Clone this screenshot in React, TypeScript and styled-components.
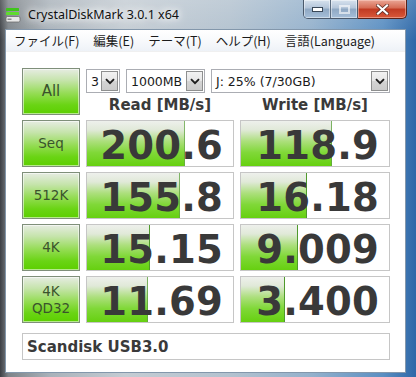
import React from 'react';
import styled, { createGlobalStyle } from 'styled-components';

const GlobalStyle = createGlobalStyle`
  html, body {
    margin: 0;
    padding: 0;
    background: #1d2733;
  }
  body {
    width: 416px;
    height: 377px;
    overflow: hidden;
  }
`;

const Window = styled.div`
  width: 416px;
  height: 377px;
  box-sizing: border-box;
  display: flex;
  flex-direction: column;
  padding: 0 10px 5px 5px;
  background:
    linear-gradient(180deg, rgba(255, 255, 255, 0.18) 0%, rgba(255, 255, 255, 0) 40px),
    linear-gradient(90deg, #3c3f44 0%, #7d8388 2%, #a9b2ba 12%, #c4ccd3 30%, #b3c2cf 55%, #94b1cc 75%, #5b8fc2 92%, #2e68a8 100%);
`;

const TitleBar = styled.div`
  height: 29px;
  display: flex;
  align-items: flex-start;
  flex-shrink: 0;
`;

const AppIcon = styled.svg`
  width: 16px;
  height: 16px;
  margin-top: 7px;
  flex-shrink: 0;
`;

const Title = styled.div`
  margin: 7px 0 0 7px;
  font-family: "Noto Sans", "DejaVu Sans", sans-serif;
  font-size: 12.5px;
  line-height: 16px;
  color: #111;
  text-shadow: 0 0 6px #fff, 0 0 10px #fff, 0 0 14px rgba(255, 255, 255, 0.9);
  flex: 1;
`;

const CaptionButtons = styled.div`
  display: flex;
  margin-right: -1px;
`;

const CaptionGroup = styled.div`
  display: flex;
  border: 1px solid #4b5a6c;
  border-top: none;
  border-radius: 0 0 0 5px;
  overflow: hidden;
`;

const CaptionButton = styled.div<{ $first?: boolean }>`
  width: 26px;
  height: 18px;
  display: flex;
  align-items: center;
  justify-content: center;
  background: linear-gradient(180deg, #d7e2ee 0%, #b3c5d9 45%, #8fa8c3 50%, #a6bfd9 100%);
  border-left: ${p => (p.$first ? 'none' : '1px solid #5c6d80')};
  box-shadow: inset 0 0 0 1px rgba(255, 255, 255, 0.45);
`;

const CloseButton = styled.div`
  width: 48px;
  height: 18px;
  display: flex;
  align-items: center;
  justify-content: center;
  border: 1px solid #5a2219;
  border-top: none;
  border-left: none;
  border-radius: 0 0 5px 0;
  background: linear-gradient(180deg, #eaa695 0%, #d56a52 45%, #c03a22 50%, #d9583a 100%);
  box-shadow: inset 0 0 0 1px rgba(255, 220, 210, 0.45);
`;

const Client = styled.div`
  flex: 1;
  display: flex;
  flex-direction: column;
  background: #ffffff;
  border: 1px solid #8397ab;
`;

const MenuBar = styled.div`
  height: 21px;
  display: flex;
  align-items: center;
  padding-left: 1px;
  background: linear-gradient(180deg, #ffffff 0%, #f6f8fb 60%, #eef2f7 100%);
  border-bottom: 1px solid #f0f0f0;
`;

const MenuItem = styled.div`
  padding: 0 7px;
  font-family: "Noto Sans CJK JP", "Noto Sans", sans-serif;
  font-size: 12.5px;
  color: #1b1b1b;
  line-height: 21px;
`;

const Body = styled.div`
  padding: 16px 15px 12px 16px;
`;

const Grid = styled.div`
  display: grid;
  grid-template-columns: 58px 148px 150px;
  grid-auto-rows: 47px;
  column-gap: 6px;
  row-gap: 5px;
`;

const GreenButton = styled.div<{ $big?: boolean }>`
  box-sizing: border-box;
  border: 1px solid #7f8f7a;
  display: flex;
  flex-direction: column;
  align-items: center;
  justify-content: center;
  background: linear-gradient(180deg, #e6ece2 0%, #c6e4ac 25%, #93dc52 55%, #6ad414 80%, #5ccf00 100%);
  box-shadow: inset 0 0 0 1px rgba(255, 255, 255, 0.55);
  font-family: "DejaVu Sans", Verdana, sans-serif;
  font-size: ${p => (p.$big ? '15px' : '13.5px')};
  line-height: 17px;
  color: #3a532c;
`;

const HeaderArea = styled.div`
  grid-column: 2 / 4;
  display: flex;
  flex-direction: column;
  padding-top: 1px;
`;

const SelectRow = styled.div`
  display: flex;
  gap: 6px;
`;

const Select = styled.div<{ $width: number }>`
  box-sizing: border-box;
  width: ${p => p.$width}px;
  height: 24px;
  display: flex;
  align-items: center;
  border: 1px solid #abadb3;
  background: #fff;
  padding: 1px;
`;

const SelectText = styled.div`
  flex: 1;
  padding-left: 3px;
  font-family: "DejaVu Sans", Verdana, sans-serif;
  font-size: 12.5px;
  color: #1a1a1a;
  white-space: nowrap;
  overflow: hidden;
`;

const SelectArrow = styled.div`
  box-sizing: border-box;
  width: 17px;
  height: 20px;
  display: flex;
  align-items: center;
  justify-content: center;
  border: 1px solid #8e8f8f;
  background: linear-gradient(180deg, #f2f2f2 0%, #e6e6e6 50%, #d4d4d4 51%, #cbcbcb 100%);
`;

const ColumnTitles = styled.div`
  flex: 1;
  display: grid;
  grid-template-columns: 148px 150px;
  column-gap: 6px;
  align-items: center;
  padding-top: 2px;
`;

const ColumnTitle = styled.div`
  text-align: center;
  font-family: "DejaVu Sans", Verdana, sans-serif;
  font-weight: bold;
  font-size: 15px;
  color: #3a3a3a;
`;

const ResultBox = styled.div<{ $fill: number }>`
  box-sizing: border-box;
  border: 1px solid #c6c6c6;
  display: flex;
  align-items: center;
  justify-content: flex-end;
  padding: 5px 10px 0 0;
  background-color: #fff;
  background-image:
    linear-gradient(270deg, #4f9a2c 0, #4f9a2c 1px, transparent 1px),
    linear-gradient(180deg, #eef0ec 0%, #e0e9d8 20%, #acdf7c 45%, #80d838 70%, #66d010 100%);
  background-repeat: no-repeat;
  background-size: ${p => p.$fill}% 100%;
  font-family: "DejaVu Sans", Verdana, sans-serif;
  font-weight: bold;
  font-size: 38.5px;
  line-height: 40px;
  color: #393939;
  letter-spacing: 0.2px;
`;

const CommentBox = styled.div`
  box-sizing: border-box;
  margin-top: 10px;
  height: 27px;
  border: 1px solid #c6c6c6;
  display: flex;
  align-items: center;
  padding-left: 4px;
  font-family: "DejaVu Sans", Verdana, sans-serif;
  font-weight: bold;
  font-size: 15px;
  color: #3a3a3a;
`;

interface Result {
  label: string[];
  read: string;
  readFill: number;
  write: string;
  writeFill: number;
}

const results: Result[] = [
  { label: ['Seq'], read: '200.6', readFill: 66.9, write: '118.9', writeFill: 61.3 },
  { label: ['512K'], read: '155.8', readFill: 63.5, write: '16.18', writeFill: 44.7 },
  { label: ['4K'], read: '15.15', readFill: 43.2, write: '9.009', writeFill: 38.7 },
  { label: ['4K', 'QD32'], read: '11.69', readFill: 41.6, write: '3.400', writeFill: 30 },
];

const Chevron = () => (
  <svg width="10" height="7" viewBox="0 0 10 7">
    <polyline points="1,1.2 5,5.2 9,1.2" fill="none" stroke="#1e1e1e" strokeWidth="1.9" />
  </svg>
);

const Dropdown: React.FC<{ value: string; width: number }> = ({ value, width }) => (
  <Select $width={width}>
    <SelectText>{value}</SelectText>
    <SelectArrow>
      <Chevron />
    </SelectArrow>
  </Select>
);

const App: React.FC = () => {
  return (
    <>
      <GlobalStyle />
      <Window>
        <TitleBar>
          <AppIcon viewBox="0 0 16 16">
            <rect x="1" y="1" width="13" height="3" rx="0.5" fill="#3fc51b" />
            <rect x="1" y="5" width="13" height="3" rx="0.5" fill="#5fdc2e" />
            <rect x="1" y="9.5" width="14" height="5.5" rx="1.5" fill="#e8e8e8" stroke="#6d6d6d" strokeWidth="0.8" />
            <rect x="2.5" y="11.5" width="4" height="1.5" fill="#8a8a8a" />
          </AppIcon>
          <Title>CrystalDiskMark 3.0.1 x64</Title>
          <CaptionButtons>
            <CaptionGroup>
              <CaptionButton $first>
                <svg width="11" height="5" viewBox="0 0 11 5">
                  <rect x="0.5" y="0.5" width="10" height="4" fill="#fff" stroke="#3a4858" strokeWidth="1" />
                </svg>
              </CaptionButton>
              <CaptionButton>
                <svg width="11" height="9" viewBox="0 0 11 9">
                  <rect x="1" y="1" width="9" height="7" fill="none" stroke="rgba(255,255,255,0.6)" strokeWidth="2" />
                </svg>
              </CaptionButton>
            </CaptionGroup>
            <CloseButton>
              <svg width="13" height="11" viewBox="0 0 13 11">
                <path d="M2 1.5 L11 9.5 M11 1.5 L2 9.5" stroke="#5a2a22" strokeWidth="3.6" strokeLinecap="square" />
                <path d="M2 1.5 L11 9.5 M11 1.5 L2 9.5" stroke="#fff" strokeWidth="2.2" strokeLinecap="square" />
              </svg>
            </CloseButton>
          </CaptionButtons>
        </TitleBar>
        <Client>
          <MenuBar>
            <MenuItem>ファイル(F)</MenuItem>
            <MenuItem>編集(E)</MenuItem>
            <MenuItem>テーマ(T)</MenuItem>
            <MenuItem>ヘルプ(H)</MenuItem>
            <MenuItem>言語(Language)</MenuItem>
          </MenuBar>
          <Body>
            <Grid>
              <GreenButton $big>All</GreenButton>
              <HeaderArea>
                <SelectRow>
                  <Dropdown value="3" width={34} />
                  <Dropdown value="1000MB" width={79} />
                  <Dropdown value="J: 25% (7/30GB)" width={179} />
                </SelectRow>
                <ColumnTitles>
                  <ColumnTitle>Read [MB/s]</ColumnTitle>
                  <ColumnTitle>Write [MB/s]</ColumnTitle>
                </ColumnTitles>
              </HeaderArea>
              {results.map(r => (
                <React.Fragment key={r.label.join('')}>
                  <GreenButton>
                    {r.label.map(l => (
                      <span key={l}>{l}</span>
                    ))}
                  </GreenButton>
                  <ResultBox $fill={r.readFill}>{r.read}</ResultBox>
                  <ResultBox $fill={r.writeFill}>{r.write}</ResultBox>
                </React.Fragment>
              ))}
            </Grid>
            <CommentBox>Scandisk USB3.0</CommentBox>
          </Body>
        </Client>
      </Window>
    </>
  );
};

export default App;
